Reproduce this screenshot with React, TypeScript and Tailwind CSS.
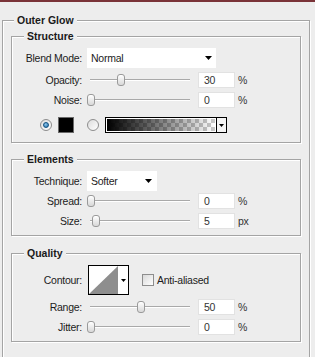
import React from "react";

const Arrow = ({ className = "" }: { className?: string }) => (
  <svg width="7" height="4" viewBox="0 0 7 4" className={className}>
    <polygon points="0,0 7,0 3.5,4" fill="#000" />
  </svg>
);

const Label = ({ text }: { text: string }) => (
  <div className="w-[70px] shrink-0 text-right">{text}</div>
);

const Slider = ({ value }: { value: number }) => (
  <div className="relative ml-[5px] h-full w-[103px] shrink-0">
    <div className="absolute left-[3px] right-0 top-1/2 h-[2px] -translate-y-1/2 border-t border-[#a9a9a9] border-b border-b-white" />
    <div
      className="absolute top-1/2 h-[12px] w-[8px] -translate-y-1/2 rounded-[3px] border border-[#9a9a9a] bg-gradient-to-b from-white to-[#d8d8d8]"
      style={{ left: value }}
    />
  </div>
);

const NumberBox = ({ value, unit }: { value: string; unit: string }) => (
  <>
    <div className="ml-[8px] flex h-[16px] w-[37px] shrink-0 items-center border border-[#e2e2e2] bg-white pl-[5px] text-[#333]">
      {value}
    </div>
    <span className="ml-[3px] text-[#333]">{unit}</span>
  </>
);

const SliderRow = ({
  label,
  value,
  pos,
  unit,
  className = "",
}: {
  label: string;
  value: string;
  pos: number;
  unit: string;
  className?: string;
}) => (
  <div className={`flex h-[20px] items-center ${className}`}>
    <Label text={label} />
    <Slider value={pos} />
    <NumberBox value={value} unit={unit} />
  </div>
);

const Radio = ({ checked }: { checked?: boolean }) => (
  <div className="flex h-[12px] w-[12px] shrink-0 items-center justify-center rounded-full border border-[#8d8d8d] bg-gradient-to-br from-[#dcdcdc] to-white">
    {checked && (
      <div className="h-[6px] w-[6px] rounded-full border border-[#11507f] bg-[radial-gradient(circle_at_40%_35%,#8fc6ec,#1f6fa9)]" />
    )}
  </div>
);

const Box = ({
  title,
  className = "",
  children,
}: {
  title: string;
  className?: string;
  children: React.ReactNode;
}) => (
  <fieldset
    className={`w-[290px] border border-[#a4a4a4] shadow-[inset_1px_1px_0_#fff,1px_1px_0_#fff] ${className}`}
  >
    <legend className="ml-[12px] bg-[#ededed] px-[3px] text-[10.5px] font-bold leading-[14px] tracking-normal text-[#1a1a1a]">
      {title}
    </legend>
    {children}
  </fieldset>
);

export default function App() {
  return (
    <div className="h-[357px] w-[315px] overflow-hidden bg-[#ededed] font-['Liberation_Sans',Arial,sans-serif] text-[10.5px] leading-[13px] tracking-[-0.25px] text-[#1c1c1c]">
      <div className="h-[2px] bg-[#7a3338]" />
      <fieldset className="ml-[2px] mt-[11px] w-[308px] border border-[#a4a4a4] px-[8px] pb-[40px] shadow-[inset_1px_1px_0_#fff,1px_1px_0_#fff]">
        <legend className="ml-[3px] bg-[#ededed] px-[3px] font-bold leading-[14px] tracking-normal text-[#1a1a1a]">
          Outer Glow
        </legend>

        <Box title="Structure" className="mt-[2px] pb-[9px]">
          <div className="mt-[5px] flex h-[20px] items-center">
            <Label text="Blend Mode:" />
            <div className="ml-[5px] flex h-[20px] w-[129px] items-center justify-between bg-white pl-[4px] pr-[4px]">
              <span>Normal</span>
              <Arrow />
            </div>
          </div>
          <SliderRow label="Opacity:" value="30" pos={30} unit="%" className="mt-[2px]" />
          <SliderRow label="Noise:" value="0" pos={0} unit="%" className="h-[19px]" />
          <div className="mt-[7px] flex h-[16px] items-center">
            <div className="ml-[28px]">
              <Radio checked />
            </div>
            <div className="ml-[6px] h-[16px] w-[16px] border border-[#6a6a6a] bg-black" />
            <div className="ml-[13px]">
              <Radio />
            </div>
            <div className="ml-[6px] flex h-[16px] w-[122px] border border-black">
              <div className="flex-1 border border-white">
                <svg width="100%" height="100%" preserveAspectRatio="none">
                  <defs>
                    <pattern id="chk" width="8" height="8" patternUnits="userSpaceOnUse">
                      <rect width="8" height="8" fill="#fff" />
                      <rect width="4" height="4" fill="#c9c9c9" />
                      <rect x="4" y="4" width="4" height="4" fill="#c9c9c9" />
                    </pattern>
                    <linearGradient id="fade" x1="0" x2="1" y1="0" y2="0">
                      <stop offset="0" stopColor="#000" stopOpacity="1" />
                      <stop offset="1" stopColor="#000" stopOpacity="0" />
                    </linearGradient>
                  </defs>
                  <rect width="100%" height="100%" fill="url(#chk)" />
                  <rect width="100%" height="100%" fill="url(#fade)" />
                </svg>
              </div>
              <div className="flex w-[10px] items-center justify-center border-l border-black bg-[#f4f4f4]">
                <svg width="5" height="3" viewBox="0 0 5 3">
                  <polygon points="0,0 5,0 2.5,3" fill="#000" />
                </svg>
              </div>
            </div>
          </div>
        </Box>

        <Box title="Elements" className="mt-[9px] pb-[4px]">
          <div className="mt-[5px] flex h-[20px] items-center">
            <Label text="Technique:" />
            <div className="ml-[5px] flex h-[20px] w-[70px] items-center justify-between bg-white pl-[4px] pr-[5px]">
              <span>Softer</span>
              <Arrow />
            </div>
          </div>
          <SliderRow label="Spread:" value="0" pos={0} unit="%" />
          <SliderRow label="Size:" value="5" pos={5} unit="px" />
        </Box>

        <Box title="Quality" className="mt-[10px] pb-[4px]">
          <div className="mt-[5px] flex h-[30px] items-center">
            <Label text="Contour:" />
            <div className="ml-[6px] flex h-[30px] w-[41px] border border-black bg-white">
              <svg width="29" height="28" viewBox="0 0 29 28" className="shrink-0">
                <polygon points="0,28 29,0 29,28" fill="#8e8e8e" />
              </svg>
              <div className="flex flex-1 items-center justify-center">
                <svg width="5" height="3" viewBox="0 0 5 3">
                  <polygon points="0,0 5,0 2.5,3" fill="#000" />
                </svg>
              </div>
            </div>
            <div className="ml-[13px] h-[12px] w-[12px] border border-[#8d8d8d] bg-gradient-to-br from-[#d9d9d9] to-white" />
            <span className="ml-[3px]">Anti-aliased</span>
          </div>
          <SliderRow label="Range:" value="50" pos={50} unit="%" className="mt-[2px]" />
          <SliderRow label="Jitter:" value="0" pos={0} unit="%" />
        </Box>
      </fieldset>
    </div>
  );
}
